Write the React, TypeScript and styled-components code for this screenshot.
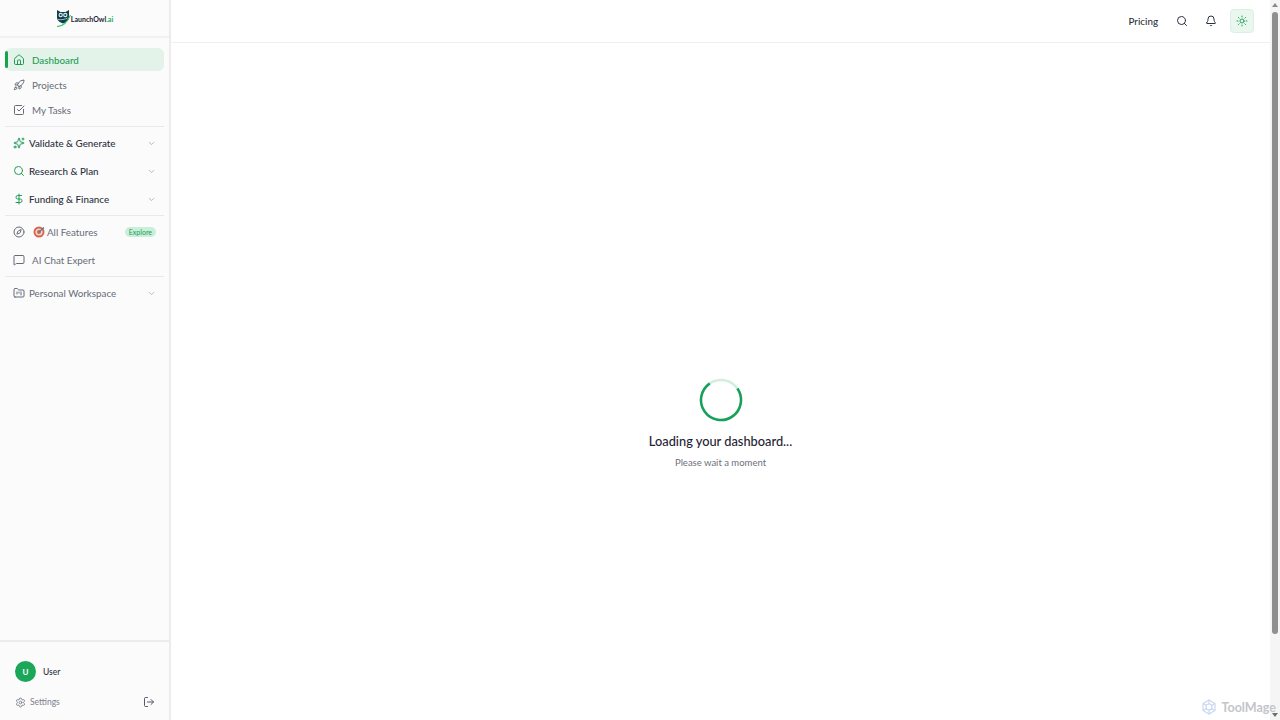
import { createGlobalStyle, styled } from "styled-components";
import {
  Bell,
  ChevronDown,
  Compass,
  DollarSign,
  FolderKanban,
  Home,
  LogOut,
  MessageSquare,
  Rocket,
  Search,
  Settings,
  Sparkles,
  SquareCheckBig,
  Sun,
} from "lucide-react";

const GlobalStyle = createGlobalStyle`
  html, body { margin: 0; padding: 0; height: 100%; overflow: hidden; background: #fff; }
  #root { height: 100%; }
  * { box-sizing: border-box; }
  body { font-family: Lato, Roboto, sans-serif; color: #1f2430; }
`;

const Page = styled.div`
  display: flex;
  width: 1280px;
  height: 720px;
  position: relative;
`;

const Sidebar = styled.aside`
  width: 171px;
  flex: none;
  display: flex;
  flex-direction: column;
  background: #fbfbfb;
  border-right: 2px solid #ececee;
`;

const Brand = styled.div`
  height: 38px;
  flex: none;
  display: flex;
  align-items: flex-start;
  justify-content: center;
  padding-top: 9px;
  border-bottom: 2px solid #f1f1f2;
`;

const BrandLogo = styled.div`
  display: flex;
  align-items: center;
  gap: 0;
  height: 18px;
`;

const BrandText = styled.span`
  font-size: 7px;
  font-weight: 700;
  color: #1b2430;
  margin-top: 2px;
  em {
    font-style: normal;
    color: #22a45d;
  }
`;

const Nav = styled.nav`
  flex: 1;
  display: flex;
  flex-direction: column;
  padding: 10px 5px 0 5px;
`;

const Item = styled.div<{ $active?: boolean }>`
  position: relative;
  height: 23px;
  margin-bottom: 2.4px;
  display: flex;
  align-items: center;
  gap: 7px;
  padding-left: 8px;
  border-radius: 6px;
  font-size: 9.8px;
  font-weight: ${(p) => (p.$active ? 500 : 400)};
  color: ${(p) => (p.$active ? "#1f9d57" : "#666b78")};
  background: ${(p) => (p.$active ? "#e3f3e9" : "transparent")};
  svg {
    color: ${(p) => (p.$active ? "#1f9d57" : "#666b78")};
  }
`;

const ActiveBar = styled.span`
  position: absolute;
  left: 0;
  top: 3px;
  bottom: 3px;
  width: 3px;
  border-radius: 2px;
  background: #16a34a;
`;

const Divider = styled.div`
  height: 1px;
  flex: none;
  background: #e9e9eb;
  margin: 2px 0;
`;

const Group = styled.div<{ $muted?: boolean }>`
  height: 28px;
  display: flex;
  align-items: center;
  gap: 4px;
  padding: 0 8px 0 8px;
  font-size: 9.8px;
  font-weight: ${(p) => (p.$muted ? 400 : 500)};
  color: ${(p) => (p.$muted ? "#666b78" : "#2b3040")};
  svg:first-child {
    color: ${(p) => (p.$muted ? "#666b78" : "#1f9d57")};
  }
`;

const GroupLabel = styled.span`
  flex: 1;
`;

const Caret = styled(ChevronDown)`
  color: #a2a5ad;
`;

const FeatureItem = styled.div`
  height: 28px;
  display: flex;
  align-items: center;
  padding: 0 8px 0 8px;
  font-size: 9.8px;
  color: #666b78;
`;

const Emoji = styled.span`
  margin-left: 8px;
  margin-right: 2px;
  width: 12px;
  display: flex;
`;

const ExploreBadge = styled.span`
  margin-left: auto;
  height: 10px;
  padding: 0 4px;
  border-radius: 5px;
  background: #c9eeda;
  color: #1f9d57;
  font-size: 7px;
  line-height: 10px;
`;

const ChatItem = styled(FeatureItem)`
  gap: 7px;
`;

const Footer = styled.div`
  flex: none;
  height: 80px;
  display: flex;
  flex-direction: column;
  border-top: 2px solid #ececee;
  padding: 19px 15px 0 15px;
`;

const UserRow = styled.div`
  display: flex;
  align-items: center;
  gap: 7px;
  font-size: 8.5px;
  font-weight: 500;
  color: #2b3040;
`;

const Avatar = styled.div`
  width: 21px;
  height: 21px;
  border-radius: 50%;
  background: #1aa75a;
  color: #fff;
  display: flex;
  align-items: center;
  justify-content: center;
  font-size: 8px;
  font-weight: 700;
`;

const FooterRow = styled.div`
  display: flex;
  align-items: center;
  gap: 4px;
  margin-top: 14px;
  font-size: 8.5px;
  color: #7c808b;
  svg:last-child {
    margin-left: auto;
    margin-right: -1px;
    color: #555a66;
  }
`;

const Main = styled.main`
  flex: 1;
  display: flex;
  flex-direction: column;
  min-width: 0;
`;

const Topbar = styled.header`
  height: 43px;
  flex: none;
  display: flex;
  align-items: center;
  justify-content: flex-end;
  gap: 17px;
  padding-right: 16px;
  border-bottom: 1px solid #f0f0f1;
  color: #2b3040;
`;

const Pricing = styled.span`
  font-size: 9.8px;
  font-weight: 500;
  margin-right: 1px;
`;

const ThemeButton = styled.div`
  width: 24px;
  height: 24px;
  margin-left: -4px;
  border-radius: 4px;
  border: 1px solid #dcefe3;
  background: #eaf7ef;
  color: #22a45d;
  display: flex;
  align-items: center;
  justify-content: center;
`;

const Loader = styled.div`
  flex: 1;
  display: flex;
  flex-direction: column;
  align-items: center;
  padding-top: 335px;
`;

const Title = styled.div`
  margin-top: 10px;
  font-size: 12.8px;
  line-height: 18px;
  font-weight: 500;
  color: #1f2333;
`;

const Subtitle = styled.div`
  margin-top: 6px;
  font-size: 9.5px;
  line-height: 14px;
  color: #6d717d;
`;

const Scrollbar = styled.div`
  width: 10px;
  flex: none;
  background: #f5f5f5;
  display: flex;
  flex-direction: column;
  align-items: center;
  padding-top: 3px;
`;

const ArrowUp = styled.span`
  width: 0;
  height: 0;
  border-left: 3px solid transparent;
  border-right: 3px solid transparent;
  border-bottom: 4px solid #8a8a8a;
`;

const ArrowDown = styled.span`
  position: absolute;
  right: 2px;
  bottom: 3px;
  width: 0;
  height: 0;
  border-left: 3px solid transparent;
  border-right: 3px solid transparent;
  border-top: 4px solid #6e6e6e;
`;

const Thumb = styled.div`
  width: 6px;
  height: 622px;
  margin-top: 5px;
  border-radius: 3px;
  background: #8f8f8f;
`;

const Watermark = styled.div`
  position: absolute;
  right: 4px;
  bottom: 5px;
  display: flex;
  align-items: center;
  gap: 4px;
  font-size: 12.5px;
  font-weight: 700;
  color: #c3c5ca;
`;

const OwlLogo = () => (
  <svg width="15" height="18" viewBox="0 0 15 18">
    <path d="M1 1 L4.500 3 H9.500 L13 1 L13 8.500 C13 11.500 10 13.500 7 14.500 C4 13.500 1 11.500 1 8.500 Z" fill="#123c4c" />
    <circle cx="4.700" cy="6" r="2.200" fill="#d8efe9" />
    <circle cx="9.300" cy="6" r="2.200" fill="#d8efe9" />
    <circle cx="4.700" cy="6" r="1.100" fill="#123c4c" />
    <circle cx="9.300" cy="6" r="1.100" fill="#123c4c" />
    <path d="M2 10.500 C5 11 9 10.500 11.500 9" fill="none" stroke="#d8efe9" strokeWidth="0.700" />
    <path d="M1 17.500 C7 17.500 11.500 13 14.500 6" fill="none" stroke="#3ac473" strokeWidth="1.100" />
  </svg>
);

const Target = () => (
  <svg width="12" height="12" viewBox="0 0 12 12">
    <circle cx="6" cy="6" r="5.500" fill="#d9634e" />
    <circle cx="6" cy="6" r="3.600" fill="#e8d8cc" />
    <circle cx="6" cy="6" r="2" fill="#d9634e" />
    <path d="M6 6 L11 1.500" stroke="#4a7fa0" strokeWidth="1.200" />
  </svg>
);

const Spinner = () => (
  <svg width="44" height="44" viewBox="0 0 44 44">
    <circle cx="22" cy="22" r="20" fill="none" stroke="#cfeedd" strokeWidth="2.500" />
    <circle
      cx="22"
      cy="22"
      r="20"
      fill="none"
      stroke="#16a05a"
      strokeWidth="2.500"
      strokeDasharray="94 125.700"
      transform="rotate(-35 22 22)"
    />
  </svg>
);

const KnotLogo = () => (
  <svg width="16" height="16" viewBox="0 0 16 16" fill="none" stroke="#c6d6f0" strokeWidth="1.100">
    <path d="M8 1 L14 4.500 V11.500 L8 15 L2 11.500 V4.500 Z" />
    <circle cx="8" cy="8" r="3" />
    <path d="M8 1 L8 5 M14 4.500 L10.500 6.500 M14 11.500 L10.500 9.500 M8 15 V11 M2 11.500 L5.500 9.500 M2 4.500 L5.500 6.500" />
  </svg>
);

export default function App() {
  return (
    <Page>
      <GlobalStyle />
      <Sidebar>
        <Brand>
          <BrandLogo>
            <OwlLogo />
            <BrandText>
              LaunchOwl<em>.ai</em>
            </BrandText>
          </BrandLogo>
        </Brand>
        <Nav>
          <Item $active>
            <ActiveBar />
            <Home size={12} />
            Dashboard
          </Item>
          <Item>
            <Rocket size={12} />
            Projects
          </Item>
          <Item>
            <SquareCheckBig size={12} />
            My Tasks
          </Item>
          <Divider />
          <Group>
            <Sparkles size={12} />
            <GroupLabel>Validate &amp; Generate</GroupLabel>
            <Caret size={9} />
          </Group>
          <Group>
            <Search size={12} />
            <GroupLabel>Research &amp; Plan</GroupLabel>
            <Caret size={9} />
          </Group>
          <Group>
            <DollarSign size={12} />
            <GroupLabel>Funding &amp; Finance</GroupLabel>
            <Caret size={9} />
          </Group>
          <Divider />
          <FeatureItem>
            <Compass size={12} />
            <Emoji>
              <Target />
            </Emoji>
            All Features
            <ExploreBadge>Explore</ExploreBadge>
          </FeatureItem>
          <ChatItem>
            <MessageSquare size={12} />
            AI Chat Expert
          </ChatItem>
          <Divider />
          <Group $muted>
            <FolderKanban size={12} />
            <GroupLabel>Personal Workspace</GroupLabel>
            <Caret size={9} />
          </Group>
        </Nav>
        <Footer>
          <UserRow>
            <Avatar>U</Avatar>
            User
          </UserRow>
          <FooterRow>
            <Settings size={11} />
            Settings
            <LogOut size={12} />
          </FooterRow>
        </Footer>
      </Sidebar>
      <Main>
        <Topbar>
          <Pricing>Pricing</Pricing>
          <Search size={12} />
          <Bell size={12} />
          <ThemeButton>
            <Sun size={12} />
          </ThemeButton>
        </Topbar>
        <Loader>
          <Spinner />
          <Title>Loading your dashboard...</Title>
          <Subtitle>Please wait a moment</Subtitle>
        </Loader>
      </Main>
      <Scrollbar>
        <ArrowUp />
        <Thumb />
      </Scrollbar>
      <ArrowDown />
      <Watermark>
        <KnotLogo />
        ToolMage
      </Watermark>
    </Page>
  );
}
